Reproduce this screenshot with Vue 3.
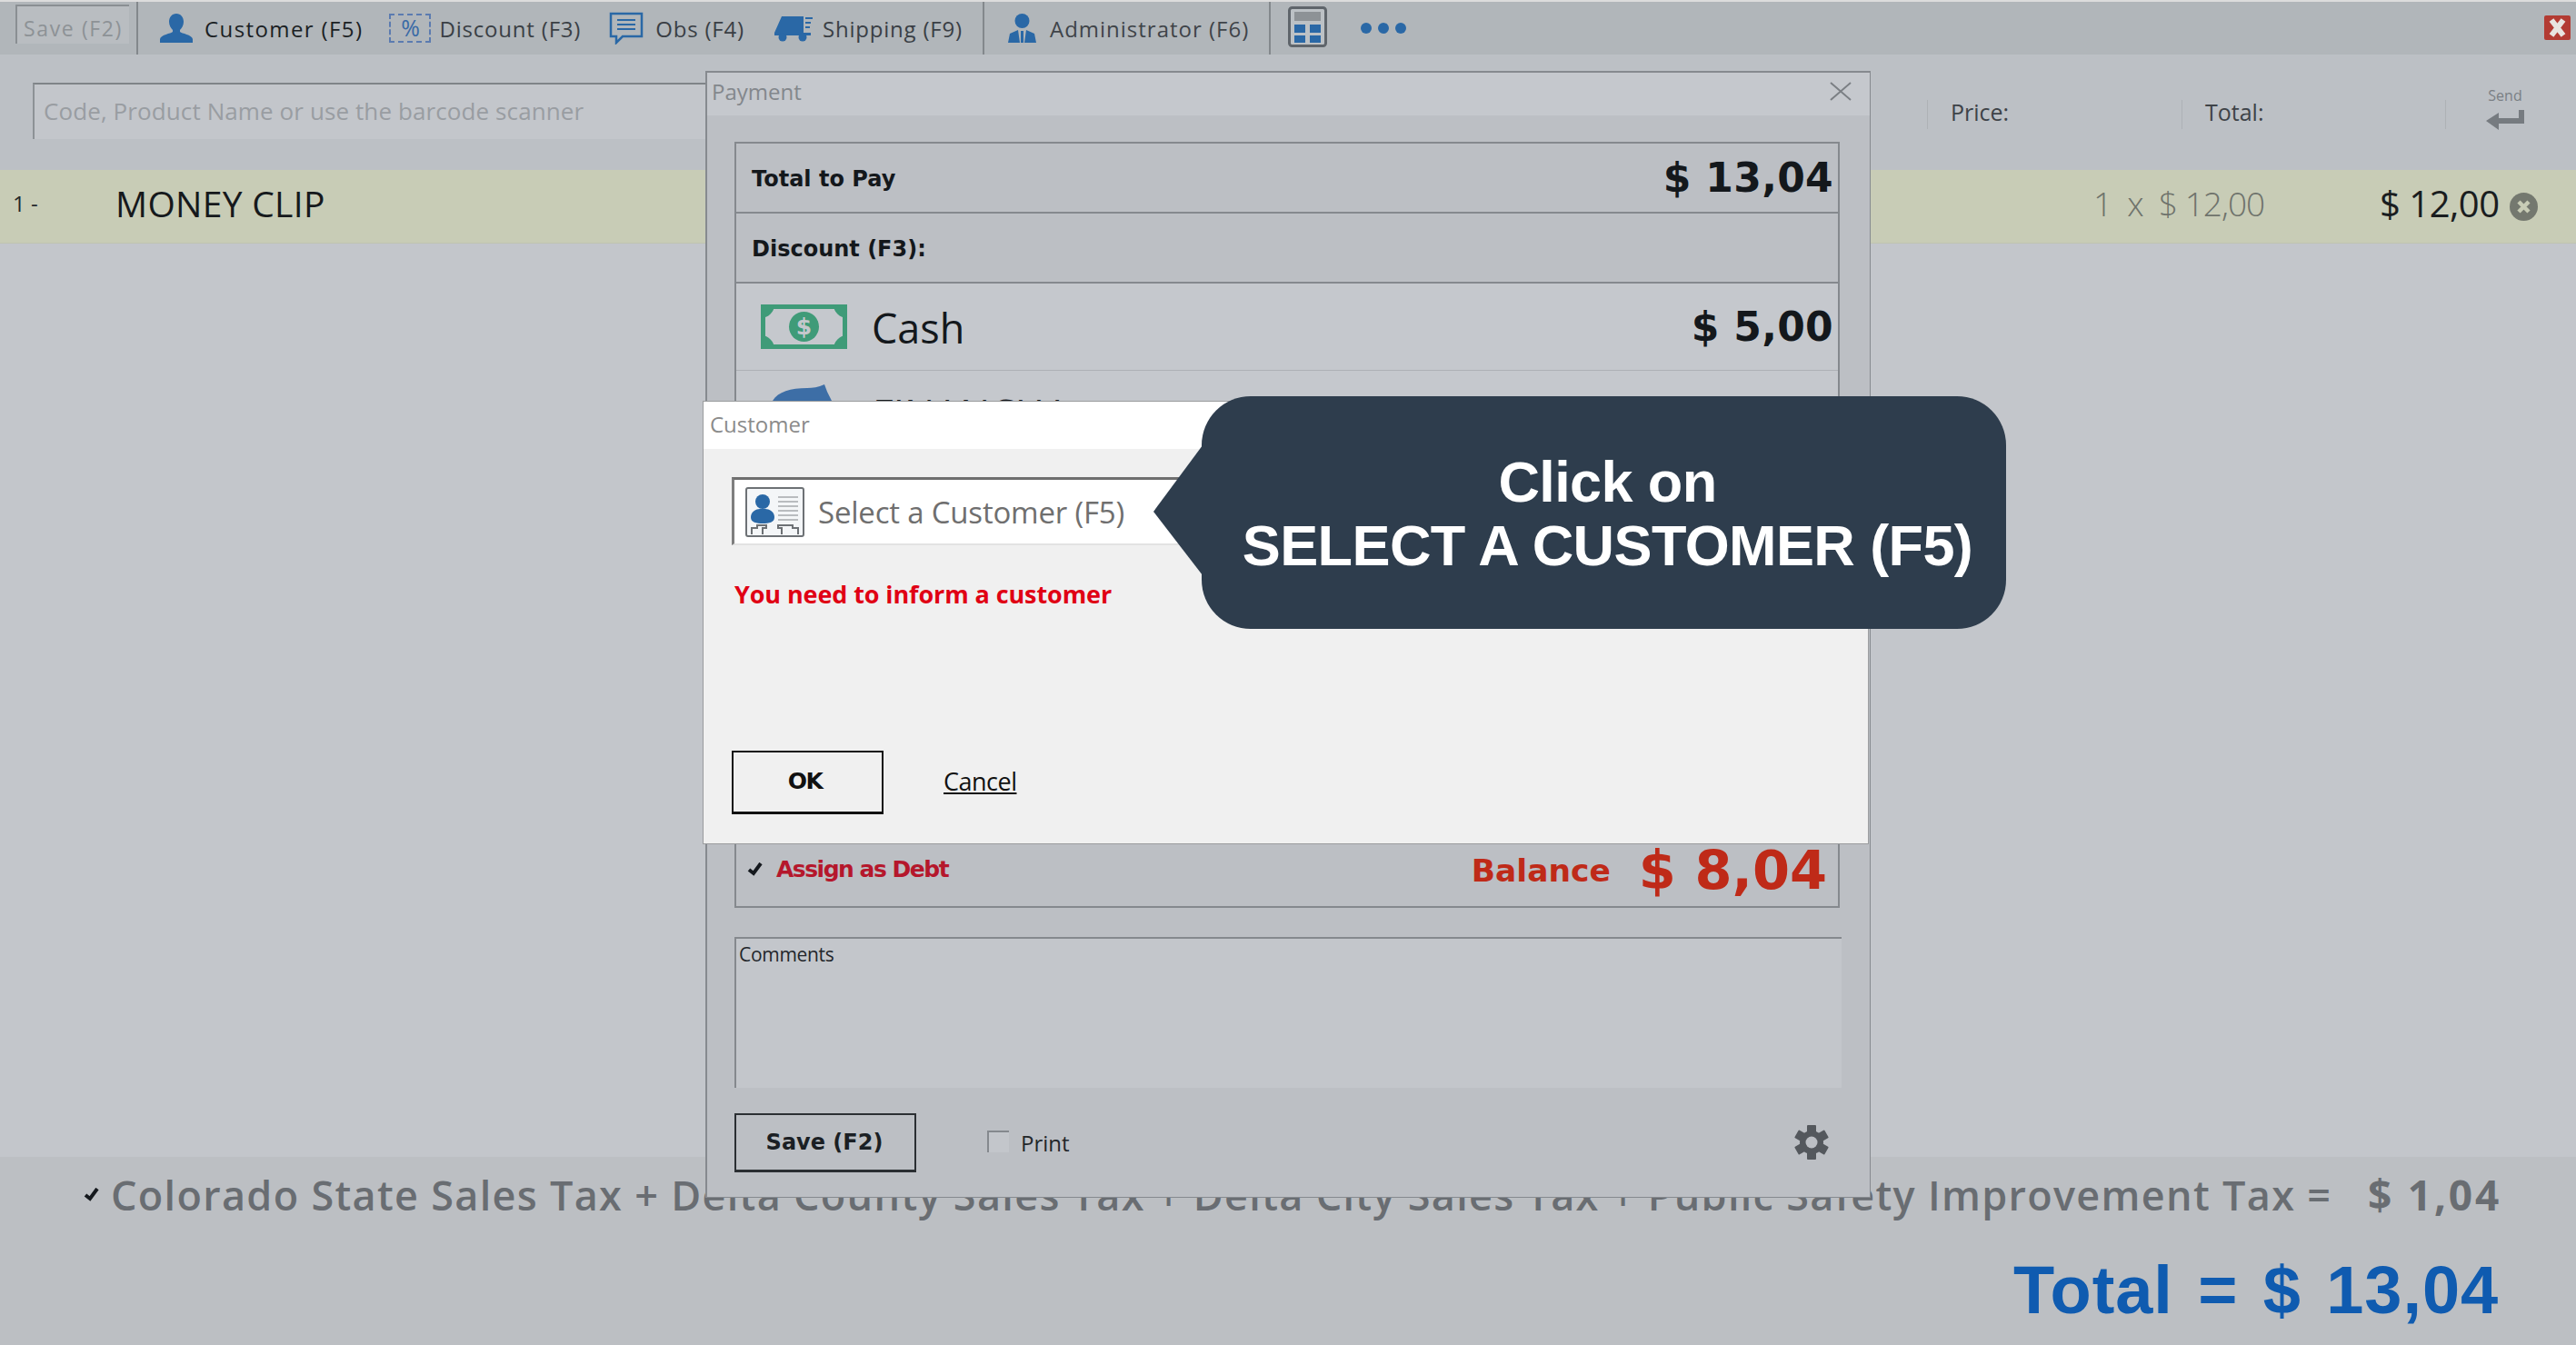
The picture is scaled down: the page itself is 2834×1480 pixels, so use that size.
<script setup>
const taxText = 'Colorado State Sales Tax + Delta County Sales Tax + Delta City Sales Tax + Public Safety Improvement Tax ='
</script>

<template>
  <div class="page">
    <header class="toolbar">
      <div class="save-box">Save (F2)</div>
      <span class="divider d1"></span>
      <div class="tool t-customer">
        <svg class="ico" width="36" height="32" viewBox="0 0 36 32"><path fill="#2a68a6" d="M18 0c5 0 8 4 8 9 0 4-2 7-4 9v2c2 2 13 3 14 8v4H0v-4c1-5 12-6 14-8v-2c-2-2-4-5-4-9 0-5 3-9 8-9z"/></svg>
        <span>Customer (F5)</span>
      </div>
      <div class="tool t-discount">
        <div class="pct">%</div>
        <span class="muted">Discount (F3)</span>
      </div>
      <div class="tool t-obs">
        <svg class="ico" width="38" height="36" viewBox="0 0 38 36"><path fill="none" stroke="#2a68a6" stroke-width="2.500" d="M2 2h34v25H15l-7 7v-7H2z"/><path stroke="#2a68a6" stroke-width="2" d="M9 9h20M9 14h20M9 19h20"/></svg>
        <span class="muted">Obs (F4)</span>
      </div>
      <div class="tool t-ship">
        <svg class="ico" width="42" height="30" viewBox="0 0 42 30"><path fill="#2a68a6" d="M8 2h24v18H0zM34 3h8v2h-8zM34 8h6v2h-6zM34 13h5v2h-5zM0 20h40v3H0z"/><circle cx="9" cy="25" r="4.500" fill="#2a68a6"/><circle cx="31" cy="25" r="4.500" fill="#2a68a6"/></svg>
        <span class="muted">Shipping (F9)</span>
      </div>
      <span class="divider d2"></span>
      <div class="tool t-admin">
        <svg class="ico" width="31" height="32" viewBox="0 0 31 32"><circle cx="15.500" cy="8" r="8" fill="#2a68a6"/><path fill="#2a68a6" d="M11 18L2 22l-2 10h13zM20 18l9 4 2 10H18z"/><path fill="#2a68a6" d="M14 19h3v13h-3z"/></svg>
        <span class="muted">Administrator (F6)</span>
      </div>
      <span class="divider d3"></span>
      <svg class="calc" width="43" height="45" viewBox="0 0 43 45">
        <rect x="1.500" y="1.500" width="40" height="42" rx="3" fill="#bcc1c5" stroke="#5f656b" stroke-width="3"/>
        <rect x="7" y="6" width="29" height="10" fill="#8d9296"/>
        <rect x="7" y="20" width="12" height="9" fill="#2a68a6"/><rect x="24" y="20" width="12" height="9" fill="#2a68a6"/>
        <rect x="7" y="32" width="12" height="8" fill="#2a68a6"/><rect x="24" y="32" width="12" height="8" fill="#2a68a6"/>
      </svg>
      <svg class="dots" width="52" height="14" viewBox="0 0 52 14"><circle cx="7" cy="7" r="6" fill="#2a68a6"/><circle cx="26" cy="7" r="6" fill="#2a68a6"/><circle cx="45" cy="7" r="6" fill="#2a68a6"/></svg>
      <div class="close-red">
        <svg width="29" height="27" viewBox="0 0 29 27"><rect width="29" height="27" rx="2" fill="#b33b33"/><path d="M8 5l13 17M21 5L8 22" stroke="#e8e4e0" stroke-width="6"/></svg>
      </div>
    </header>

    <section class="entry">
      <div class="search">Code, Product Name or use the barcode scanner</div>
      <div class="labels">
        <span class="sep s1"></span><span class="lab l1">Price:</span>
        <span class="sep s2"></span><span class="lab l2">Total:</span>
        <span class="sep s3"></span>
        <div class="send">
          <span>Send</span>
          <svg width="42" height="22" viewBox="0 0 42 22"><path fill="#767b80" d="M36 0h6v15H14v7L0 12 14 3v6h22z"/></svg>
        </div>
      </div>
    </section>

    <section class="row">
      <span class="idx">1 -</span>
      <span class="name">MONEY CLIP</span>
      <span class="qty">1&nbsp; x&nbsp; $ 12,00</span>
      <span class="amt">$ 12,00</span>
      <svg class="rm" width="31" height="31" viewBox="0 0 31 31"><circle cx="15.500" cy="15.500" r="15.500" fill="#74786f"/><path d="M10 10l11 11M21 10L10 21" stroke="#c8ccb6" stroke-width="4.500"/></svg>
    </section>

    <div class="spacer"></div>

    <footer class="foot">
      <div class="tax">
        <svg width="17" height="15" viewBox="0 0 17 15"><path fill="none" stroke="#15191e" stroke-width="4" d="M2 8l5 4 8-11"/></svg>
        <span class="tax-text">{{ taxText }}</span>
        <span class="tax-val">$ 1,04</span>
      </div>
      <div class="grand">Total = $ 13,04</div>
    </footer>

    <div class="payment">
      <div class="pay-title">
        <span>Payment</span>
        <svg width="24" height="21" viewBox="0 0 24 21"><path d="M1 1l22 19M23 1L1 20" stroke="#7b7f84" stroke-width="2"/></svg>
      </div>
      <div class="pay-body">
        <div class="box">
          <div class="b-row r-total"><b>Total to Pay</b><strong>$ 13,04</strong></div>
          <div class="b-row r-disc"><b>Discount (F3):</b></div>
          <div class="b-row r-cash">
            <svg class="money" width="95" height="49" viewBox="0 0 95 49">
              <rect x="2.500" y="2.500" width="90" height="44" fill="none" stroke="#3f9b78" stroke-width="5"/>
              <path fill="#3f9b78" d="M0 0h15a15 15 0 0 1-15 15zM95 0H80a15 15 0 0 0 15 15zM0 49h15a15 15 0 0 0-15-15zM95 49H80a15 15 0 0 1 15-15z"/>
              <circle cx="47.500" cy="24.500" r="16.500" fill="#3f9b78"/>
              <text x="47.500" y="33" text-anchor="middle" class="money-t">$</text>
            </svg>
            <span class="cash">Cash</span>
            <strong>$ 5,00</strong>
          </div>
          <div class="b-row r-next">
            <svg class="next-ico" width="66" height="40" viewBox="0 0 66 40"><path fill="#3d6ea6" d="M0 18C6 8 20 4 38 4 44 4 50 3 57 0l3 8 5 10v22H0z"/></svg>
            <span class="next-t">FINANCIAL</span>
          </div>
          <div class="b-row r-debt">
            <svg width="17" height="15" viewBox="0 0 17 15"><path fill="none" stroke="#15191e" stroke-width="4" d="M2 8l5 4 8-11"/></svg>
            <span class="debt">Assign as Debt</span>
            <span class="bal-l">Balance</span>
            <span class="bal-v">$ 8,04</span>
          </div>
        </div>
        <div class="comments">Comments</div>
        <div class="pay-foot">
          <div class="save-btn">Save (F2)</div>
          <span class="check"></span>
          <span class="print">Print</span>
          <svg class="gear" width="40" height="38" viewBox="0 0 40 38">
            <g fill="#54585d">
              <circle cx="20" cy="19" r="13"/>
              <rect x="15" y="0" width="10" height="38" rx="1"/>
              <rect x="15" y="0" width="10" height="38" rx="1" transform="rotate(60 20 19)"/>
              <rect x="15" y="0" width="10" height="38" rx="1" transform="rotate(120 20 19)"/>
            </g>
            <circle cx="20" cy="19" r="6.500" fill="#bcbfc4"/>
          </svg>
        </div>
      </div>
    </div>

    <div class="customer">
      <div class="cust-title">Customer</div>
      <div class="cust-body">
        <div class="select">
          <svg width="65" height="55" viewBox="0 0 65 55">
            <rect x="1" y="1" width="63" height="53" rx="2" fill="#f4f6f8" stroke="#6d7175" stroke-width="2"/>
            <circle cx="19" cy="16" r="8" fill="#2a68a6"/>
            <path fill="#2a68a6" d="M6 33c0-6 6-9 10-9h6c4 0 10 3 10 9s-6 7-13 7-13-1-13-7z"/>
            <path stroke="#b9bcbf" stroke-width="2" d="M36 11h22M36 16h22M36 21h22M36 26h22M36 31h22M36 36h22"/>
            <path fill="none" stroke="#6d7175" stroke-width="2" d="M7 52v-7h6v-3h10v3h-4v7M40 52v-7h-4v-3h16v3h6v7"/>
          </svg>
          <span>Select a Customer (F5)</span>
        </div>
        <div class="err">You need to inform a customer</div>
        <div class="cust-actions">
          <div class="ok">OK</div>
          <a class="cancel">Cancel</a>
        </div>
      </div>
    </div>

    <div class="bubble">
      <div>Click on</div>
      <div>SELECT A CUSTOMER (F5)</div>
    </div>
  </div>
</template>

<style scoped>
.page {
  position: relative;
  width: 2834px;
  height: 1480px;
  overflow: hidden;
  display: flex;
  flex-direction: column;
  background: #c3c6cb;
  font-family: "Open Sans", "Liberation Sans", sans-serif;
  color: #1b1f24;
}
.toolbar {
  height: 58px;
  margin-top: 2px;
  background: #b1b6ba;
  display: flex;
  align-items: center;
  position: relative;
  box-shadow: 0 -2px 0 #dcdcdc;
  font-size: 24px;
  letter-spacing: 1.400px;
  white-space: nowrap;
}
.save-box {
  margin-left: 17px;
  width: 125px;
  height: 43px;
  margin-top: -10px;
  box-sizing: border-box;
  border-top: 2px solid #8a8f93;
  border-left: 2px solid #8a8f93;
  background: #b9bdc1;
  color: #8d9296;
  font-size: 23px;
  letter-spacing: 1.600px;
  line-height: 48px;
  text-align: center;
}
.divider { width: 2px; height: 58px; background: #83888c; flex: none; }
.d1 { margin-left: 8px; }
.d2 { margin-left: 22px; }
.d3 { margin-left: 22px; }
.tool { display: flex; align-items: center; flex: none; }
.ico { flex: none; }
.t-customer { margin-left: 24px; gap: 13px; }
.t-discount { margin-left: 29px; gap: 9px; }
.t-obs { margin-left: 31px; gap: 13px; }
.t-ship { margin-left: 33px; gap: 11px; }
.t-admin { margin-left: 26px; gap: 15px; }
.muted { color: #3a3f45; letter-spacing: 0.800px; }
.t-admin span { color: #3f4449; letter-spacing: 1px; }
.pct {
  width: 46px;
  height: 32px;
  box-sizing: border-box;
  border: 2px dashed #5b7bb0;
  color: #3a6aa6;
  font-size: 25px;
  line-height: 27px;
  letter-spacing: 0;
  text-align: center;
}
.calc { margin-left: 19px; flex: none; margin-top: -4px; }
.dots { margin-left: 36px; flex: none; }
.close-red { position: absolute; left: 2799px; top: 15px; line-height: 0; }

.entry { height: 127px; background: #bcc0c5; position: relative; flex: none; }
.search {
  position: absolute;
  left: 36px;
  top: 31px;
  width: 800px;
  height: 62px;
  box-sizing: border-box;
  border-top: 2px solid #7f8488;
  border-left: 2px solid #8d9296;
  background: #c3c6cb;
  color: #999da2;
  font-size: 26px;
  letter-spacing: 0.100px;
  line-height: 58px;
  padding-left: 10px;
}
.labels { position: absolute; inset: 0; }
.sep { position: absolute; top: 50px; width: 1px; height: 32px; background: #aeb2b6; }
.s1 { left: 2120px; } .s2 { left: 2400px; } .s3 { left: 2690px; }
.lab { position: absolute; top: 45px; font-size: 25px; line-height: 36px; color: #3e4348; }
.l1 { left: 2146px; } .l2 { left: 2426px; }
.send {
  position: absolute;
  left: 2735px;
  top: 34px;
  width: 42px;
  display: flex;
  flex-direction: column;
  gap: 5px;
  font-size: 16px;
  line-height: 22px;
  color: #7a7f84;
  text-align: center;
}

.row {
  height: 81px;
  flex: none;
  box-sizing: border-box;
  background: #c8ccb6;
  border-bottom: 1px solid #bfc3b0;
  padding-bottom: 7px;
  display: flex;
  align-items: center;
  font-size: 39px;
  white-space: nowrap;
}
.idx { margin-left: 14px; font-size: 24px; width: 113px; color: #23272b; }
.name { width: 2177px; color: #16191c; letter-spacing: 0.300px; }
.qty { font-weight: 300; color: #6f736c; font-size: 37px; letter-spacing: -1px; position: absolute; left: 2303px; }
.amt { position: absolute; left: 2618px; font-weight: 400; font-size: 40px; letter-spacing: -0.500px; color: #1a1d1f; }
.rm { position: absolute; left: 2761px; margin-top: 7px; }

.spacer { flex: 1; }

.foot { height: 207px; flex: none; background: #bcbfc3; position: relative; }
.tax {
  display: flex;
  align-items: center;
  height: 82px;
  padding-left: 92px;
  color: #696d72;
  white-space: nowrap;
}
.tax-text { margin-left: 13px; font-size: 45px; font-weight: 600; letter-spacing: 1.300px; width: 2483px; flex: none; }
.tax-val { font-size: 46px; font-weight: 700; letter-spacing: 2.800px; }
.grand {
  text-align: right;
  padding-right: 85px;
  font-family: "Liberation Sans", sans-serif;
  font-weight: 700;
  font-size: 74px;
  letter-spacing: 0.900px;
  word-spacing: 6px;
  line-height: 80px;
  margin-top: 25px;
  color: #0f5bb0;
}

.payment {
  position: absolute;
  left: 776px;
  top: 78px;
  width: 1282px;
  height: 1240px;
  box-sizing: border-box;
  border: 2px solid #868a8f;
  border-bottom-width: 1px;
  border-right-width: 1px;
  background: #bcbfc4;
  display: flex;
  flex-direction: column;
}
.pay-title {
  height: 47px;
  flex: none;
  background: #c5c8cd;
  display: flex;
  justify-content: space-between;
  align-items: center;
  padding: 0 20px 6px 5px;
  box-sizing: border-box;
  font-size: 24px;
  color: #83878c;
}
.pay-body { flex: 1; padding: 29px 33px 0 30px; display: flex; flex-direction: column; }
.box {
  height: 843px;
  box-sizing: border-box;
  border: 2px solid #85898e;
  border-bottom-width: 2px;
  display: flex;
  flex-direction: column;
  flex: none;
}
.b-row { display: flex; align-items: center; box-sizing: border-box; flex: none; padding: 0 5px 0 17px; }
.b-row b {
  font-family: "DejaVu Sans", sans-serif;
  font-size: 24px;
  font-weight: 700;
  color: #14181c;
  padding-top: 2px;
}
.b-row strong {
  margin-left: auto;
  font-family: "DejaVu Sans", sans-serif;
  font-size: 44px;
  font-weight: 700;
  letter-spacing: 0.300px;
  color: #14181c;
}
.r-total { height: 77px; border-bottom: 2px solid #85898e; }
.r-disc { height: 77px; border-bottom: 2px solid #85898e; }
.r-cash { height: 96px; background: #c5c8cd; border-bottom: 1px solid #aeb1b6; padding-left: 27px; }
.cash { margin-left: 27px; font-size: 45px; color: #14181c; line-height: 60px; padding-top: 2px; }
.money-t { font-family: "DejaVu Sans", sans-serif; font-size: 25px; font-weight: 700; fill: #c5c8cd; }
.r-next { height: 80px; background: #c5c8cd; align-items: flex-start; padding-left: 40px; }
.next-ico { margin-top: 15px; }
.next-t { margin-left: 44px; margin-top: 16px; font-size: 44px; line-height: 60px; color: #14181c; }
.r-debt { margin-top: auto; height: 71px; padding-left: 12px; padding-right: 12px; }
.debt {
  margin-left: 15px;
  font-family: "DejaVu Sans", sans-serif;
  font-weight: 700;
  font-size: 25px;
  letter-spacing: -1.500px;
  color: #b5172c;
  margin-top: -10px;
}
.r-debt svg { margin-top: -10px; }
.bal-l {
  margin-left: auto;
  font-family: "DejaVu Sans", sans-serif;
  font-weight: 700;
  font-size: 34.500px;
  color: #bf2a18;
  margin-top: -8px;
}
.bal-v {
  margin-left: 31px;
  font-family: "DejaVu Sans", sans-serif;
  font-weight: 700;
  font-size: 59px;
  line-height: 70px;
  color: #bf2a18;
  margin-top: -8px;
}
.comments {
  margin-top: 32px;
  height: 166px;
  flex: none;
  box-sizing: border-box;
  border-top: 2px solid #85898e;
  border-left: 2px solid #85898e;
  background: #c3c6cb;
  width: 1218px;
  font-size: 21px;
  padding: 3px 3px;
  color: #23272b;
  letter-spacing: -0.300px;
}
.pay-foot { display: flex; align-items: center; margin-top: 28px; height: 65px; position: relative; }
.save-btn {
  width: 200px;
  height: 65px;
  box-sizing: border-box;
  border: 2px solid #2b2f33;
  border-bottom-width: 3px;
  text-align: center;
  line-height: 60px;
  font-family: "DejaVu Sans", sans-serif;
  font-size: 24px;
  color: #1b1f24;
  font-weight: 700;
  text-indent: -2px;
}
.check {
  width: 24px;
  height: 24px;
  margin-left: 78px;
  margin-top: -4px;
  box-sizing: border-box;
  border-top: 2px solid #85898e;
  border-left: 2px solid #85898e;
  background: #c3c6cb;
}
.print { margin-left: 13px; font-size: 24px; color: #23272b; }
.gear { margin-left: auto; margin-right: 11px; margin-top: -2px; }

.customer {
  position: absolute;
  left: 773px;
  top: 441px;
  width: 1283px;
  height: 488px;
  box-sizing: border-box;
  border: 1px solid #9a9c9e;
  background: #f0f0f0;
  display: flex;
  flex-direction: column;
}
.cust-title {
  height: 52px;
  flex: none;
  background: #fff;
  font-size: 24px;
  line-height: 50px;
  padding-left: 7px;
  color: #8b8b8b;
}
.cust-body { flex: 1; padding: 31px 31px 32px 31px; display: flex; flex-direction: column; }
.select {
  height: 75px;
  flex: none;
  box-sizing: border-box;
  border-top: 3px solid #6e6e6e;
  border-left: 3px solid #7e7e7e;
  border-bottom: 2px solid #e2e2e2;
  background: #fff;
  display: flex;
  align-items: center;
  gap: 15px;
  padding-left: 12px;
  font-size: 33px;
  letter-spacing: -0.200px;
  color: #6f6f6f;
}
.err {
  margin-top: 35px;
  font-weight: 700;
  font-size: 27px;
  line-height: 38px;
  letter-spacing: -0.100px;
  color: #e00014;
  padding-left: 3px;
}
.cust-actions { margin-top: auto; display: flex; align-items: center; }
.ok {
  width: 167px;
  height: 70px;
  box-sizing: border-box;
  border: 2px solid #111;
  border-bottom-width: 3px;
  text-align: center;
  line-height: 64px;
  font-family: "DejaVu Sans", sans-serif;
  font-size: 25px;
  font-weight: 700;
  letter-spacing: -1.500px;
  text-indent: -6px;
  color: #111;
}
.cancel { margin-left: 66px; margin-top: -3px; font-size: 27px; color: #111; text-decoration: underline; letter-spacing: -0.500px; }

.bubble {
  position: absolute;
  left: 1322px;
  top: 436px;
  width: 885px;
  height: 256px;
  border-radius: 54px;
  background: #2e3d4d;
  color: #fff;
  font-family: "Liberation Sans", sans-serif;
  font-weight: 700;
  font-size: 63px;
  letter-spacing: -0.600px;
  line-height: 70px;
  text-align: center;
  display: flex;
  flex-direction: column;
  justify-content: center;
  padding: 2px 0 0 8px;
  box-sizing: border-box;
}
.bubble::before {
  content: "";
  position: absolute;
  left: -53px;
  top: 54px;
  width: 54px;
  height: 143px;
  background: #2e3d4d;
  clip-path: polygon(100% 0, 0 51%, 100% 100%);
}
</style>
